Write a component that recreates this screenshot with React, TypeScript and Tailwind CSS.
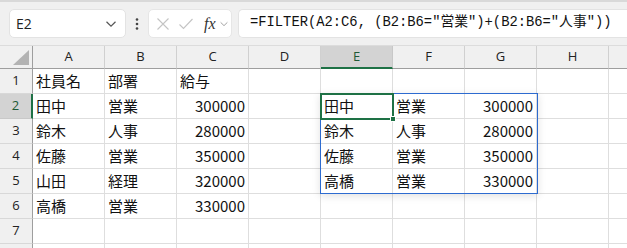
import React from "react";

const cols = ["A", "B", "C", "D", "E", "F", "G", "H", ""];

type Row = string[];

const rows: Row[] = [
  ["社員名", "部署", "給与", "", "", "", "", "", ""],
  ["田中", "営業", "300000", "", "田中", "営業", "300000", "", ""],
  ["鈴木", "人事", "280000", "", "鈴木", "人事", "280000", "", ""],
  ["佐藤", "営業", "350000", "", "佐藤", "営業", "350000", "", ""],
  ["山田", "経理", "320000", "", "高橋", "営業", "330000", "", ""],
  ["高橋", "営業", "330000", "", "", "", "", "", ""],
  ["", "", "", "", "", "", "", "", ""],
  ["", "", "", "", "", "", "", "", ""],
];

const cellFont = { fontFamily: '"Noto Sans CJK JP", "Noto Sans", sans-serif' };

const Chevron = ({ className }: { className?: string }) => (
  <svg width="12" height="8" viewBox="0 0 12 8" className={className}>
    <path d="M1.5 1.8 L6 6.2 L10.5 1.8" fill="none" stroke="currentColor" strokeWidth="1.2" />
  </svg>
);

const Toolbar = () => (
  <div className="h-[46px] border-t-2 border-[#d9d9d9] bg-[#f0f0f0] flex items-start pt-[7px] border-b border-b-[#dcdcdc]">
    <div className="ml-[9px] w-[117px] h-[29px] bg-white rounded-[5px] border border-[#e3e3e3] flex items-center justify-between pl-[6px] pr-[8px]">
      <span className="text-[14px] text-[#222]" style={{ fontFamily: '"Open Sans", "Noto Sans", sans-serif' }}>
        E2
      </span>
      <Chevron className="text-[#555]" />
    </div>
    <div className="w-[22px] h-[29px] flex items-center justify-center">
      <svg width="4" height="14" viewBox="0 0 4 14">
        <circle cx="2" cy="2.5" r="1.3" fill="#444" />
        <circle cx="2" cy="7" r="1.3" fill="#444" />
        <circle cx="2" cy="11.5" r="1.3" fill="#444" />
      </svg>
    </div>
    <div className="w-[84px] h-[29px] bg-white rounded-[5px] border border-[#e6e6e6] flex items-center pl-[7px]">
      <svg width="14" height="14" viewBox="0 0 14 14">
        <path d="M1.5 1.5 L12.5 12.5 M12.5 1.5 L1.5 12.5" stroke="#c4c4c4" strokeWidth="1.1" fill="none" />
      </svg>
      <svg width="16" height="14" viewBox="0 0 16 14" className="ml-[8px]">
        <path d="M1.5 7.5 L5.5 11.5 L14.5 2" stroke="#c4c4c4" strokeWidth="1.1" fill="none" />
      </svg>
      <span
        className="ml-[10px] text-[16px] italic text-[#333] leading-none"
        style={{ fontFamily: '"Liberation Serif", serif' }}
      >
        fx
      </span>
      <Chevron className="ml-[2px] text-[#999] scale-75" />
    </div>
    <div className="ml-[6px] flex-1 h-[29px] bg-white rounded-l-[5px] border border-[#e3e3e3] border-r-0 flex items-center pl-[11px]">
      <span
        className="text-[13.8px] text-[#111] whitespace-nowrap"
        style={{ fontFamily: '"Liberation Mono", "Noto Sans CJK JP", monospace' }}
      >
        =FILTER(A2:C6, (B2:B6="営業")+(B2:B6="人事"))
      </span>
    </div>
  </div>
);

const Grid = () => (
  <div className="relative">
    <div className="grid grid-cols-[33px_repeat(8,72px)_60px] grid-rows-[23px] auto-rows-[25px]">
      <div className="bg-[#f0f0f0] border-r border-b border-[#9e9e9e] relative">
        <svg width="18" height="16" viewBox="0 0 18 16" className="absolute right-[2px] bottom-[2px]">
          <path d="M17 0 L17 15 L1 15 Z" fill="#b3b3b3" />
        </svg>
      </div>
      {cols.map((c, k) => (
        <div
          key={k}
          className={
            c === "E"
              ? "bg-[#d3d3d3] border-r border-[#c8c8c8] border-b-2 border-b-[#1e7145] flex items-center justify-center text-[13px] text-[#1e5a36]"
              : "bg-[#f0f0f0] border-r border-[#d0d0d0] border-b border-b-[#9e9e9e] flex items-center justify-center text-[13px] text-[#222]"
          }
          style={{ fontFamily: '"Open Sans", "Noto Sans", sans-serif' }}
        >
          {c}
        </div>
      ))}
      {rows.map((r, i) => (
        <React.Fragment key={i}>
          <div
            className={
              i === 1
                ? "bg-[#d3d3d3] border-b border-[#c8c8c8] border-r-2 border-r-[#1e7145] flex items-center justify-center text-[13px] text-[#1e5a36]"
                : "bg-[#f0f0f0] border-b border-[#d8d8d8] border-r border-r-[#9e9e9e] flex items-center justify-center text-[13px] text-[#222]"
            }
            style={{ fontFamily: '"Open Sans", "Noto Sans", sans-serif' }}
          >
            {i < 7 ? i + 1 : ""}
          </div>
          {r.map((v, j) => (
            <div
              key={j}
              className={
                "border-r border-b border-[#dedede] flex items-center px-[3px] text-[15px] text-[#111] whitespace-nowrap overflow-hidden " +
                (/^\d+$/.test(v) ? "justify-end" : "justify-start")
              }
              style={cellFont}
            >
              {v}
            </div>
          ))}
        </React.Fragment>
      ))}
    </div>
    {/* spill range E2:G5 */}
    <div className="absolute left-[320px] top-[47px] w-[218px] h-[101px] border border-[#2d6bd0] shadow-[0_2px_8px_rgba(0,0,0,0.12)] pointer-events-none" />
    {/* active cell E2 */}
    <div className="absolute left-[320px] top-[47px] w-[74px] h-[27px] border-2 border-[#1e7145] pointer-events-none">
      <div className="absolute -right-[4px] -bottom-[4px] w-[6px] h-[6px] bg-[#1e7145] border border-white" />
    </div>
  </div>
);

export default function App() {
  return (
    <div className="w-[627px] h-[248px] overflow-hidden bg-white">
      <Toolbar />
      <Grid />
    </div>
  );
}
